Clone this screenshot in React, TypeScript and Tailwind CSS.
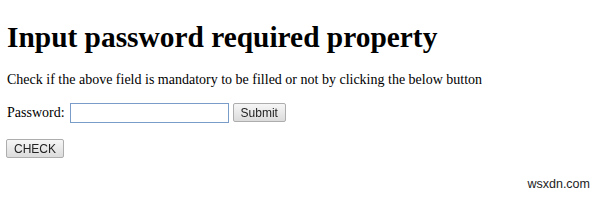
export default function App() {
  return (
    <div className="relative h-[202px] w-[600px] overflow-hidden bg-white text-black">
      <div className="px-[7px] pt-[20px] font-['Liberation_Serif',serif]">
        <h1 className="text-[29.4px] font-bold leading-[34px]">Input password required property</h1>
        <p className="mt-[17px] text-[14px] leading-[18px]">
          Check if the above field is mandatory to be filled or not by clicking the below button
        </p>
        <div className="mt-[13px] flex items-center text-[14px]">
          <span>Password:</span>
          <input
            type="password"
            required
            autoFocus
            className="ml-[5px] h-[20px] w-[159px] border border-[#7a9cc9] bg-white px-1 outline-none"
          />
          <button className="ml-[4px] h-[19px] rounded-[2px] border border-[#adadad] bg-gradient-to-b from-[#f6f6f6] to-[#dcdcdc] px-[7px] font-['Liberation_Sans',sans-serif] text-[12px] leading-none text-[#222]">
            Submit
          </button>
        </div>
        <button className="ml-[-1px] mt-[16px] h-[19px] rounded-[2px] border border-[#adadad] bg-gradient-to-b from-[#f6f6f6] to-[#dcdcdc] px-[7px] font-['Liberation_Sans',sans-serif] text-[12px] leading-none text-[#222]">
          CHECK
        </button>
      </div>
      <div className="absolute bottom-[8px] right-[10px] font-['Liberation_Sans',sans-serif] text-[12.5px] text-[#222]">
        wsxdn.com
      </div>
    </div>
  );
}
